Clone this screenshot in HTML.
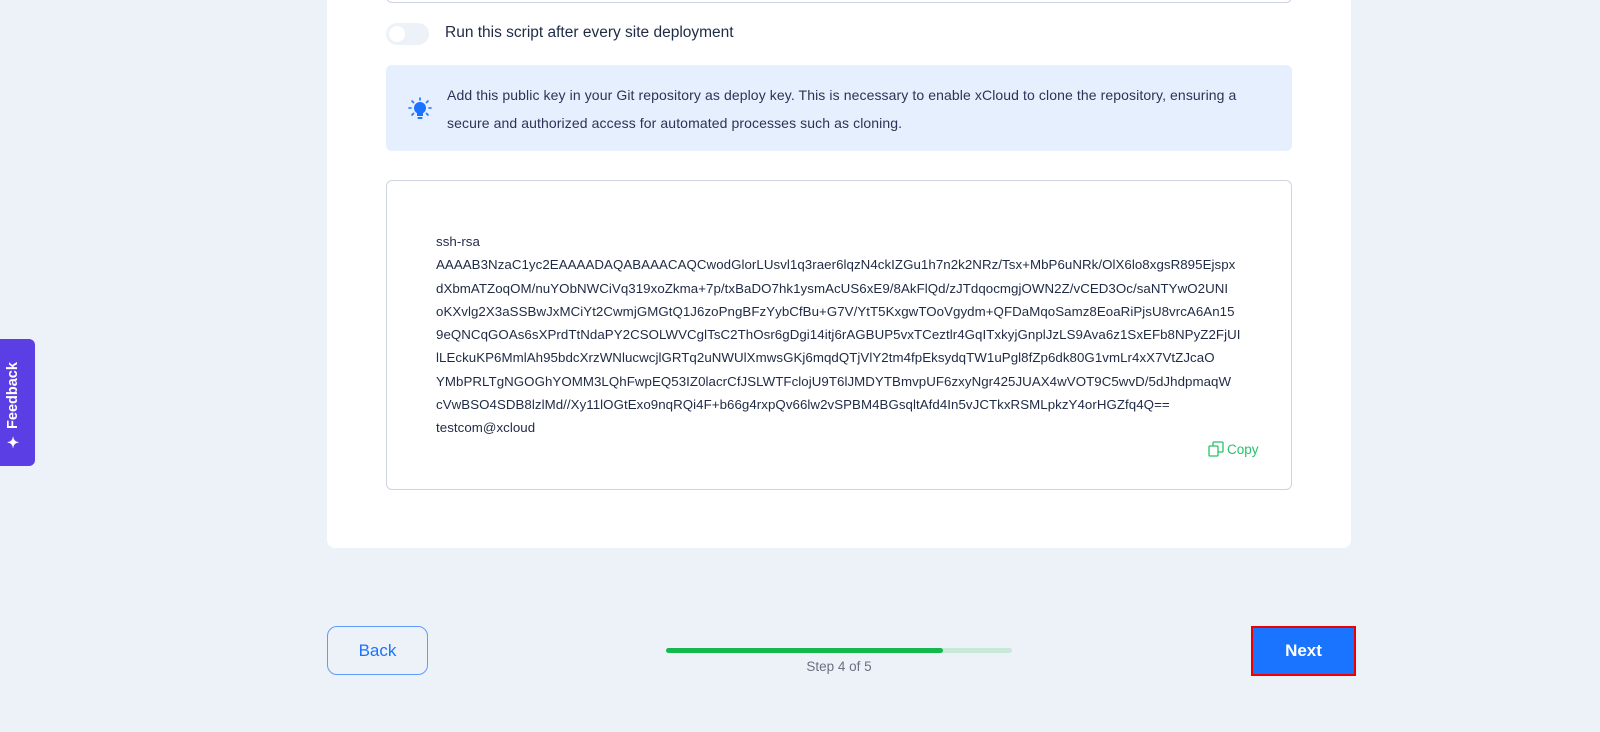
<!DOCTYPE html>
<html><head><meta charset="utf-8"><style>
*{margin:0;padding:0;box-sizing:border-box}
body{width:1600px;height:732px;background:#edf1f8;font-family:"Liberation Sans",sans-serif;position:relative;overflow:hidden;color:#1f2a44}
.card{position:absolute;left:327px;top:-10px;width:1024px;height:558px;background:#fff;border-radius:0 0 8px 8px}
.inp{position:absolute;left:386px;top:-10px;width:906px;height:13px;border:1px solid #cfd4e4;border-radius:0 0 6px 6px}
.tog{position:absolute;left:386px;top:23px;width:43px;height:22px;border-radius:11px;background:#edf1f8}
.tog i{position:absolute;left:3px;top:3px;width:16px;height:16px;border-radius:50%;background:#fff}
.lbl{position:absolute;left:445px;top:24px;font-size:15.5px;color:#1f2a44}
.info{position:absolute;left:386px;top:65px;width:906px;height:86px;background:#e6effd;border-radius:6px}
.info p{position:absolute;left:61px;top:16px;font-size:14px;line-height:28px;color:#2b3456;letter-spacing:.1px}
.key{position:absolute;left:386px;top:180px;width:906px;height:310px;border:1px solid #cfd4e0;border-radius:6px}
.key div{position:absolute;left:49px;top:49px;font-size:13.3px;line-height:23.3px;white-space:pre;color:#1f2a44;letter-spacing:.05px}
.copy{position:absolute;left:1208px;top:441px;font-size:13.5px;color:#27c26a;display:flex;align-items:center;gap:3px}
.back{position:absolute;left:327px;top:626px;width:101px;height:49px;border:1px solid #5d9cff;border-radius:10px;color:#1a74ff;font-size:17px;text-align:center;line-height:47px}
.bar{position:absolute;left:666px;top:648px;width:346px;height:5px;background:#c9e8da;border-radius:3px}
.bar i{position:absolute;left:0;top:0;width:277px;height:5px;background:#14b84d;border-radius:3px}
.step{position:absolute;left:739px;top:659px;width:200px;text-align:center;font-size:13.5px;color:#6b7180}
.next{position:absolute;left:1251px;top:626px;width:105px;height:50px;border:2px solid #ee0000;background:#1a74ff;color:#fff;font-weight:bold;font-size:17px;text-align:center;line-height:46px}
.fb{position:absolute;left:0;top:339px;width:35px;height:127px;background:#5b3fe4;border-radius:0 6px 6px 0}
.fb span{position:absolute;left:5px;top:20px;writing-mode:vertical-rl;transform:rotate(180deg);color:#fff;font-weight:bold;font-size:14.5px;height:90px}
</style></head><body>
<div class="card"></div>
<div class="inp"></div>
<div class="tog"><i></i></div>
<div class="lbl">Run this script after every site deployment</div>
<div class="info">
<svg style="position:absolute;left:22px;top:32px" width="24" height="24" viewBox="0 0 24 24"><g stroke="#1a74ff" stroke-width="1.6" stroke-linecap="round"><line x1="12" y1="1" x2="12" y2="3"/><line x1="4" y1="4" x2="5.5" y2="5.5"/><line x1="20" y1="4" x2="18.5" y2="5.5"/><line x1="1" y1="11" x2="3" y2="11"/><line x1="21" y1="11" x2="23" y2="11"/><line x1="4" y1="18" x2="5.5" y2="16.5"/><line x1="20" y1="18" x2="18.5" y2="16.5"/></g><circle cx="12" cy="11" r="6" fill="#1a74ff"/><rect x="9" y="16" width="6" height="3" fill="#1a74ff"/><rect x="9.5" y="20" width="5" height="2" rx="1" fill="#1a74ff"/></svg>
<p>Add this public key in your Git repository as deploy key. This is necessary to enable xCloud to clone the repository, ensuring a<br>secure and authorized access for automated processes such as cloning.</p></div>
<div class="key"><div>ssh-rsa
AAAAB3NzaC1yc2EAAAADAQABAAACAQCwodGlorLUsvl1q3raer6lqzN4ckIZGu1h7n2k2NRz/Tsx+MbP6uNRk/OlX6lo8xgsR895Ejspx
dXbmATZoqOM/nuYObNWCiVq319xoZkma+7p/txBaDO7hk1ysmAcUS6xE9/8AkFlQd/zJTdqocmgjOWN2Z/vCED3Oc/saNTYwO2UNI
oKXvlg2X3aSSBwJxMCiYt2CwmjGMGtQ1J6zoPngBFzYybCfBu+G7V/YtT5KxgwTOoVgydm+QFDaMqoSamz8EoaRiPjsU8vrcA6An15
9eQNCqGOAs6sXPrdTtNdaPY2CSOLWVCglTsC2ThOsr6gDgi14itj6rAGBUP5vxTCeztlr4GqITxkyjGnplJzLS9Ava6z1SxEFb8NPyZ2FjUI
lLEckuKP6MmlAh95bdcXrzWNlucwcjlGRTq2uNWUlXmwsGKj6mqdQTjVlY2tm4fpEksydqTW1uPgl8fZp6dk80G1vmLr4xX7VtZJcaO
YMbPRLTgNGOGhYOMM3LQhFwpEQ53IZ0lacrCfJSLWTFclojU9T6lJMDYTBmvpUF6zxyNgr425JUAX4wVOT9C5wvD/5dJhdpmaqW
cVwBSO4SDB8lzlMd//Xy11lOGtExo9nqRQi4F+b66g4rxpQv66lw2vSPBM4BGsqltAfd4In5vJCTkxRSMLpkzY4orHGZfq4Q==
testcom@xcloud</div></div>
<div class="copy"><svg width="16" height="16" viewBox="0 0 16 16" fill="none" stroke="#27c26a" stroke-width="1.3"><rect x="1" y="5" width="9" height="10" rx="1"/><path d="M5 5V2a1 1 0 0 1 1-1h8a1 1 0 0 1 1 1v8a1 1 0 0 1-1 1h-4"/></svg>Copy</div>
<div class="back">Back</div>
<div class="bar"><i></i></div>
<div class="step">Step 4 of 5</div>
<div class="next">Next</div>
<div class="fb"><span>✦ Feedback</span></div>
</body></html>
